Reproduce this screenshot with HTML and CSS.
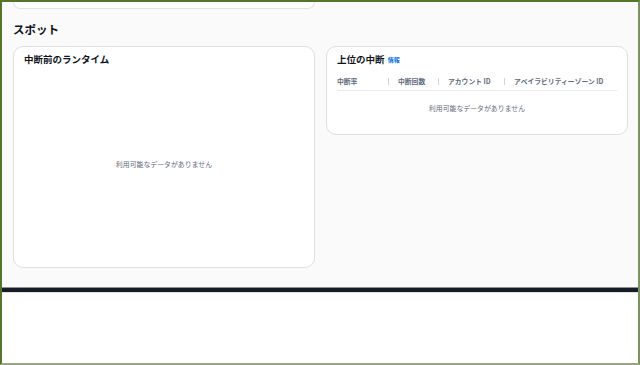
FILE: index.html
```html
<!DOCTYPE html>
<html lang="ja">
<head>
    <meta charset="UTF-8">
    <meta name="viewport" content="width=device-width, initial-scale=1.0">
    <title>スポット</title>
    <link rel="stylesheet" href="styles.css">
</head>
<body>
    <div class="frame">
        <div class="content">
            <div class="prev-card"></div>

            <h2 class="section-title">スポット</h2>

            <div class="grid">
                <div class="card card-runtime">
                    <h3 class="card-title">中断前のランタイム</h3>
                    <div class="empty empty-tall">利用可能なデータがありません</div>
                </div>

                <div class="card card-top">
                    <h3 class="card-title">上位の中断 <a class="info" href="#">情報</a></h3>
                    <table class="table">
                        <thead>
                            <tr>
                                <th class="col1">中断率</th>
                                <th class="col2">中断回数</th>
                                <th class="col3">アカウント ID</th>
                                <th class="col4">アベイラビリティーゾーン ID</th>
                            </tr>
                        </thead>
                    </table>
                    <div class="empty">利用可能なデータがありません</div>
                </div>
            </div>
        </div>
        <div class="footer-bar"></div>
        <div class="bottom"></div>
    </div>
</body>
</html>
```

FILE: styles.css
```css
* {
    box-sizing: border-box;
}

body {
    margin: 0;
    font-family: "Noto Sans CJK JP", "Noto Sans", sans-serif;
    color: #000716;
}

.frame {
    width: 640px;
    height: 365px;
    border-top: 2px solid #56752a;
    border-left: 2px solid #56752a;
    border-right: 2px solid #7f9162;
    border-bottom: 2px solid #9aa57f;
    display: flex;
    flex-direction: column;
    overflow: hidden;
}

.content {
    background: #fafafa;
    height: 285px;
    padding: 0 11px;
}

.prev-card {
    height: 7px;
    width: 302px;
    background: #fff;
    border: 1px solid #e3e3e3;
    border-top: none;
    border-radius: 0 0 10px 10px;
}

.section-title {
    margin: 11px 0 8px;
    font-size: 11.5px;
    font-weight: 700;
    line-height: 18px;
    color: #0f141a;
}

.grid {
    display: grid;
    grid-template-columns: 302px 302px;
    gap: 11px;
    align-items: start;
}

.card {
    background: #fff;
    border: 1px solid #dedede;
    border-radius: 10px;
    padding: 5px 10px;
}

.card-runtime {
    height: 222px;
}

.card-top {
    height: 89px;
}

.card-title {
    margin: 0;
    font-size: 9.5px;
    font-weight: 700;
    line-height: 14px;
    color: #0f141a;
}

.info {
    font-size: 6px;
    color: #006ce0;
    text-decoration: none;
    font-weight: 700;
    vertical-align: 1px;
    margin-left: 1px;
}

.empty {
    text-align: center;
    font-size: 6.9px;
    line-height: 10px;
    color: #5f6b7a;
    padding-top: 12px;
}

.empty-tall {
    padding-top: 93px;
}

.table {
    width: 100%;
    border-collapse: collapse;
    margin-top: 8px;
}

.table th {
    text-align: left;
    font-size: 6.8px;
    font-weight: 700;
    color: #5f6b7a;
    padding: 2px 0 4px 10px;
    border-bottom: 1px solid #e9ebed;
    position: relative;
    line-height: 9px;
}

.table th.col1 {
    padding-left: 0;
    width: 51px;
}

.table th.col2 {
    width: 50px;
}

.table th.col3 {
    width: 66px;
}

.table th + th::before {
    content: "";
    position: absolute;
    left: 0;
    top: 3px;
    height: 7px;
    border-left: 1px solid #d1d5db;
}

.footer-bar {
    height: 6px;
    background: #161d26;
    border-top: 1px solid #8c9196;
    border-bottom: 1px solid #dfe1e3;
}

.bottom {
    flex: 1;
    background: #fff;
}
```
